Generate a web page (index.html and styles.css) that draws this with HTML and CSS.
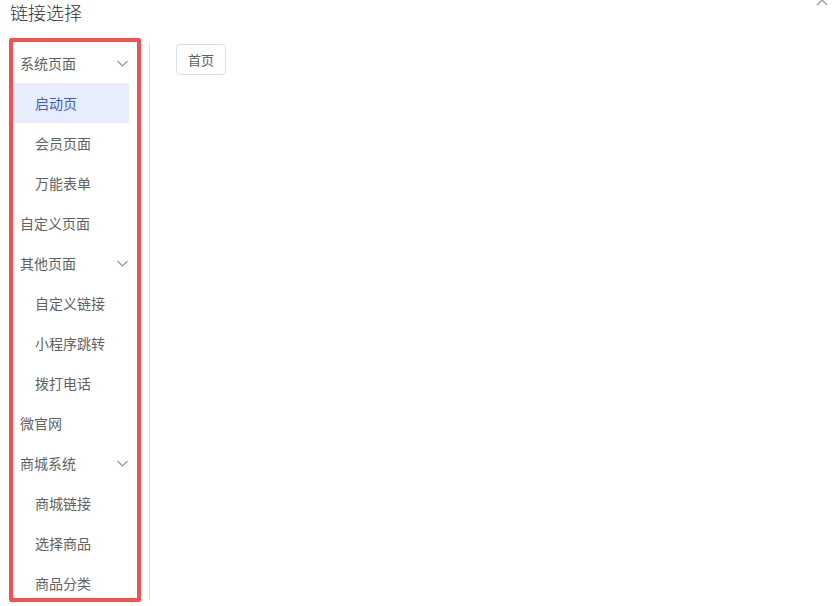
FILE: index.html
```html
<!DOCTYPE html>
<html lang="zh-CN">
<head>
  <meta charset="UTF-8" />
  <title>链接选择</title>
  <link rel="stylesheet" href="styles.css">
</head>
<body>
  <header class="dialog-header">
    <span class="dialog-title">链接选择</span>
    <svg class="close-icon" width="12" height="12" viewBox="0 0 12 12">
      <path d="M1 1 L11 11 M11 1 L1 11" stroke="#909399" stroke-width="1.2" fill="none"/>
    </svg>
  </header>

  <main class="dialog-body">
    <div class="menu-box">
      <ul class="menu">
        <li class="menu-item group">系统页面
          <svg class="arrow" width="11" height="7" viewBox="0 0 11 7"><path d="M0.5 1 L5.5 6 L10.5 1" stroke="#909399" stroke-width="1.1" fill="none"/></svg>
        </li>
        <li class="menu-item sub active">启动页</li>
        <li class="menu-item sub">会员页面</li>
        <li class="menu-item sub">万能表单</li>
        <li class="menu-item">自定义页面</li>
        <li class="menu-item group">其他页面
          <svg class="arrow" width="11" height="7" viewBox="0 0 11 7"><path d="M0.5 1 L5.5 6 L10.5 1" stroke="#909399" stroke-width="1.1" fill="none"/></svg>
        </li>
        <li class="menu-item sub">自定义链接</li>
        <li class="menu-item sub">小程序跳转</li>
        <li class="menu-item sub">拨打电话</li>
        <li class="menu-item">微官网</li>
        <li class="menu-item group">商城系统
          <svg class="arrow" width="11" height="7" viewBox="0 0 11 7"><path d="M0.5 1 L5.5 6 L10.5 1" stroke="#909399" stroke-width="1.1" fill="none"/></svg>
        </li>
        <li class="menu-item sub">商城链接</li>
        <li class="menu-item sub">选择商品</li>
        <li class="menu-item sub">商品分类</li>
      </ul>
    </div>

    <section class="link-panel">
      <button class="link-btn" type="button">首页</button>
    </section>
  </main>
</body>
</html>
```

FILE: styles.css
```css
body {
  margin: 0;
  padding: 0;
  background-color: #fff;
  font-family: "Noto Sans CJK SC", "Liberation Sans", sans-serif;
  width: 833px;
  height: 606px;
  overflow: hidden;
}

.dialog-header {
  display: flex;
  justify-content: space-between;
  align-items: flex-start;
  height: 38px;
  padding: 0 4px 0 10px;
}

.dialog-title {
  font-size: 18px;
  line-height: 24px;
  color: #303133;
  font-weight: 300;
}

.close-icon {
  margin-top: -6px;
  margin-right: 1px;
}

.dialog-body {
  display: flex;
  align-items: flex-start;
}

.menu-box {
  margin-left: 9px;
  width: 124px;
  height: 556px;
  border: 4px solid #f5504f;
  border-radius: 2px;
  overflow: hidden;
}

.menu {
  list-style: none;
  margin: 0;
  padding: 1px 0 0;
  width: 116px;
}

.menu-item {
  display: flex;
  align-items: center;
  justify-content: space-between;
  height: 40px;
  padding: 0 1px 0 7px;
  font-size: 14px;
  color: #606266;
}

.menu-item.sub {
  padding-left: 22px;
}

.menu-item.active {
  background-color: #e8edfb;
  color: #3b5bdb;
}

.arrow {
  margin-top: 1px;
}

.link-panel {
  margin-left: 8px;
  margin-top: 5px;
  height: 557px;
  padding-left: 26px;
  border-left: 1px solid #e0e0e0;
}

.link-btn {
  margin-top: 1px;
  height: 31px;
  padding: 0 11px;
  background-color: #fff;
  border: 1px solid #dcdfe6;
  border-radius: 4px;
  font-family: "Noto Sans CJK SC", "Liberation Sans", sans-serif;
  font-size: 13px;
  color: #606266;
  cursor: pointer;
}
```
